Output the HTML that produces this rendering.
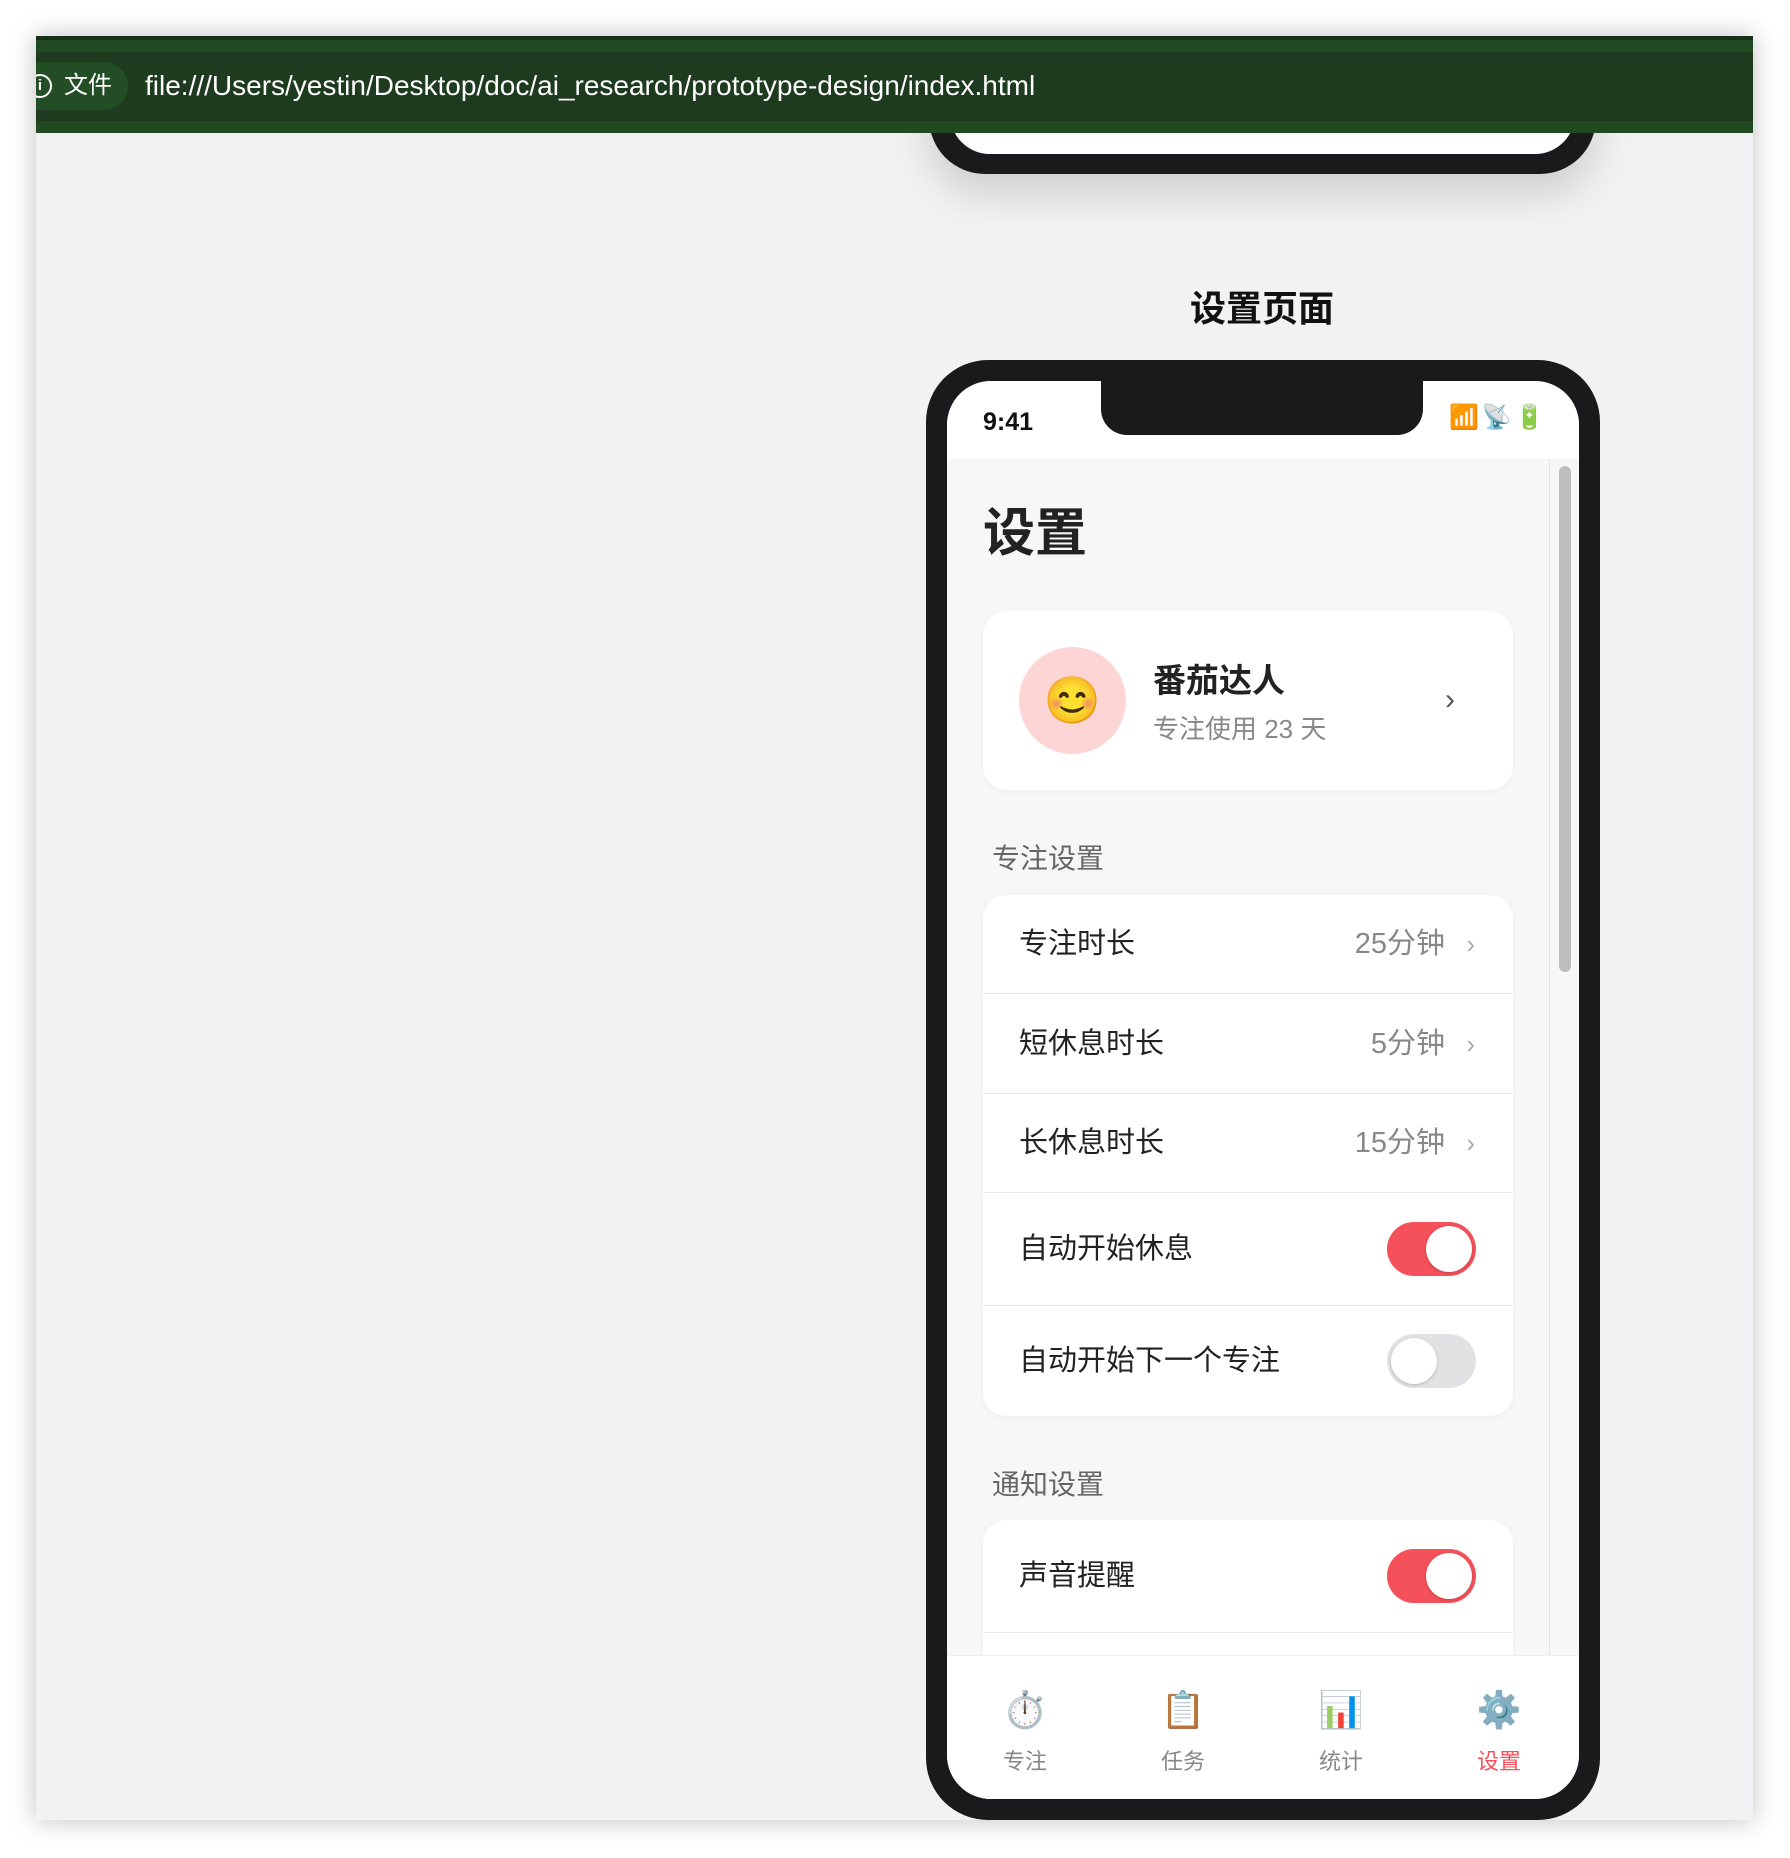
<!DOCTYPE html>
<html><head><meta charset="utf-8"><style>
*{margin:0;padding:0;box-sizing:border-box}
body{width:1790px;height:1858px;background:#fff;position:relative;overflow:hidden;font-family:"Liberation Sans","Noto Sans CJK SC",sans-serif}
.win{position:absolute;left:36px;top:36px;width:1717px;height:1784px;background:#f2f2f4;overflow:hidden;box-shadow:0 0 24px rgba(0,0,0,.25)}
.bar{position:absolute;left:0;top:0;width:100%;height:97px;background:#1e3a1f;border-top:4px solid #1a2e1a;}
.bar .l1{position:absolute;left:0;top:0;width:100%;height:12px;background:#214a22}
.bar .l2{position:absolute;left:0;bottom:0;width:100%;height:12px;background:#214a22}
.pill{position:absolute;left:-20px;top:22px;width:112px;height:48px;border-radius:24px;background:#234d24;color:#fff;font-size:24px;line-height:48px;padding-left:48px}
.url{position:absolute;left:109px;top:26px;color:#fff;font-size:28px;line-height:40px}
.abs{position:absolute}
.phone{position:absolute;left:890px;top:324px;width:674px;height:1460px;background:#1a1a1c;border-radius:62px}
.screen{position:absolute;left:21px;top:21px;width:632px;height:1418px;background:#f7f7f7;border-radius:44px;overflow:hidden}
.card{position:absolute;background:#fff;border-radius:24px;box-shadow:0 2px 8px rgba(0,0,0,.04)}
.row{position:absolute;left:0;width:530px;border-bottom:1px solid #ececec;font-size:29px;color:#222}
.row .t{position:absolute;left:36px}
.row .v{position:absolute;right:68px;color:#888}
.row .c{position:absolute;right:38px;color:#aaa;font-size:26px}
.tg{position:absolute;right:37px;width:89px;height:54px;border-radius:27px}
.tg.on{background:#f5515a}
.tg.off{background:#e2e2e4}
.tg i{position:absolute;top:4px;width:46px;height:46px;border-radius:50%;background:#fff;box-shadow:0 1px 3px rgba(0,0,0,.2)}
.tab{position:absolute;top:28px;width:120px;text-align:center;font-size:22px;color:#888}
.tab b{display:block;font-size:36px;font-weight:normal;height:60px;line-height:52px}
</style></head><body>
<div class="win">
  <div class="abs" style="left:893px;top:40px;width:667px;height:98px;background:#1a1a1c;border-radius:0 0 56px 56px;box-shadow:0 20px 40px rgba(0,0,0,.15)"><div style="position:absolute;left:21px;top:0;width:625px;height:78px;background:#fff;border-radius:0 0 40px 40px"></div></div>
  <div class="bar"><div class="l1"></div><div class="l2"></div>
    <div class="pill"><span style="position:absolute;left:12px;top:12px;width:24px;height:24px;border:2px solid #fff;border-radius:50%;font-size:15px;line-height:20px;text-align:center;font-weight:bold">i</span>文件</div>
    <div class="url">file:///Users/yestin/Desktop/doc/ai_research/prototype-design/index.html</div>
  </div>
  <div class="abs" style="left:1126px;top:244px;width:200px;text-align:center;font-size:36px;font-weight:bold;color:#111">设置页面</div>
  <div class="phone"><div class="screen">
    <div class="abs" style="left:0;top:0;width:632px;height:78px;background:#fff"></div>
    <div class="abs" style="left:154px;top:-5px;width:322px;height:59px;background:#1a1a1c;border-radius:0 0 26px 26px"></div>
    <div class="abs" style="left:36px;top:27px;font-size:25px;font-weight:bold;color:#111">9:41</div>
    <div class="abs" style="left:502px;top:22px;font-size:24px;letter-spacing:3px">📶📡🔋</div>
    <div class="abs" style="left:602px;top:78px;width:1px;height:1200px;background:#e4e4e4"></div>
    <div class="abs" style="left:612px;top:85px;width:12px;height:506px;border-radius:6px;background:#bdbdbd"></div>
    <div class="abs" style="left:36px;top:110px;font-size:52px;font-weight:bold;color:#222">设置</div>
    <div class="card" style="left:36px;top:230px;width:530px;height:179px">
      <div class="abs" style="left:36px;top:36px;width:107px;height:107px;border-radius:50%;background:#fdd5d5;text-align:center;line-height:107px;font-size:46px">😊</div>
      <div class="abs" style="left:170px;top:43px;font-size:33px;font-weight:bold;color:#222">番茄达人</div>
      <div class="abs" style="left:170px;top:98px;font-size:26px;color:#888">专注使用 23 天</div>
      <div class="abs" style="left:462px;top:72px;font-size:30px;color:#555">›</div>
    </div>
    <div class="abs" style="left:45px;top:456px;font-size:28px;color:#666">专注设置</div>
    <div class="card" style="left:36px;top:514px;width:530px;height:521px;overflow:hidden">
      <div class="row" style="top:0;height:99px;line-height:99px"><span class="t">专注时长</span><span class="v">25分钟</span><span class="c">›</span></div>
      <div class="row" style="top:99px;height:100px;line-height:100px"><span class="t">短休息时长</span><span class="v">5分钟</span><span class="c">›</span></div>
      <div class="row" style="top:199px;height:99px;line-height:99px"><span class="t">长休息时长</span><span class="v">15分钟</span><span class="c">›</span></div>
      <div class="row" style="top:298px;height:113px;line-height:113px"><span class="t">自动开始休息</span><span class="tg on" style="top:29px"><i style="left:39px"></i></span></div>
      <div class="row" style="top:411px;height:110px;line-height:110px;border:0"><span class="t">自动开始下一个专注</span><span class="tg off" style="top:28px"><i style="left:4px"></i></span></div>
    </div>
    <div class="abs" style="left:45px;top:1082px;font-size:28px;color:#666">通知设置</div>
    <div class="card" style="left:36px;top:1139px;width:530px;height:300px">
      <div class="row" style="top:0;height:113px;line-height:113px"><span class="t">声音提醒</span><span class="tg on" style="top:29px"><i style="left:39px"></i></span></div>
    </div>
    <div class="abs" style="left:0;top:1274px;width:632px;height:144px;background:#fff;border-top:1px solid #eee">
      <div class="tab" style="left:18px"><b>⏱️</b>专注</div>
      <div class="tab" style="left:176px"><b>📋</b>任务</div>
      <div class="tab" style="left:334px"><b>📊</b>统计</div>
      <div class="tab" style="left:492px;color:#f5515a"><b>⚙️</b>设置</div>
    </div>
  </div></div>
</div>
</body></html>
